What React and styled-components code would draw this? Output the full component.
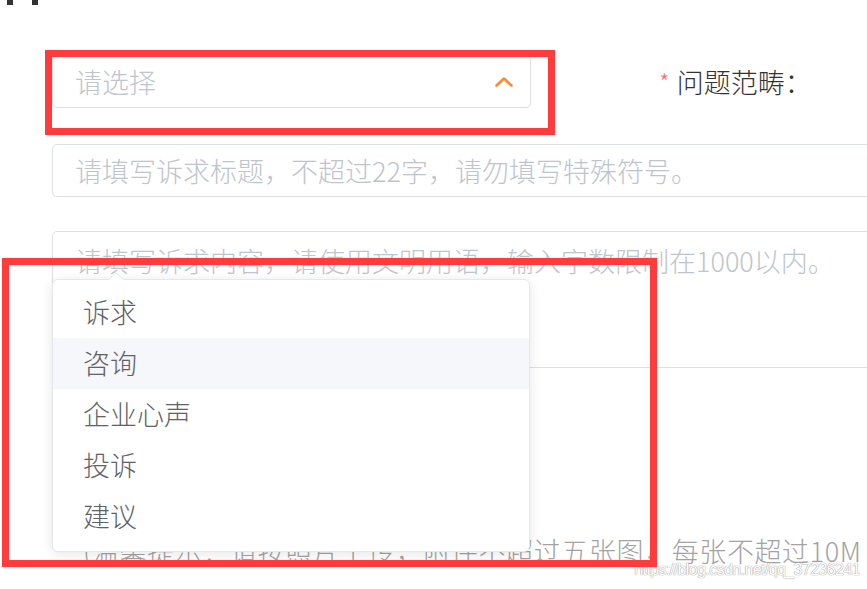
import React from "react";
import styled, { createGlobalStyle } from "styled-components";

const GlobalStyle = createGlobalStyle`
  html, body { margin: 0; padding: 0; background: #fff; }
  body { font-family: "Noto Sans CJK SC", "Noto Sans", sans-serif; }
  * { box-sizing: border-box; }
`;

const Page = styled.div`
  position: relative;
  width: 867px;
  height: 589px;
  overflow: hidden;
  background: #fff;
  font-weight: 300;
`;

const TopMarks = styled.div`
  margin-left: 7px;
  width: 31px;
  height: 5px;
  border-left: 6px solid #333;
  border-right: 6px solid #333;
`;

const Form = styled.div`
  display: flex;
  flex-direction: column;
  padding-left: 52px;
`;

const Row = styled.div`
  display: flex;
  align-items: center;
  margin-top: 50px;
  height: 53px;
`;

const Select = styled.div`
  width: 479px;
  height: 53px;
  flex: none;
  display: flex;
  align-items: center;
  justify-content: space-between;
  padding: 0 17px 0 22px;
  border: 1px solid #dcdfe6;
  border-radius: 5px;
  background: #fff;
`;

const Placeholder = styled.span`
  font-size: 27px;
  line-height: 1;
  color: #c0c4cc;
  white-space: nowrap;
`;

const Label = styled.div`
  margin-left: 128px;
  display: flex;
  align-items: center;
  gap: 7px;
  font-size: 27px;
  color: #333;
  white-space: nowrap;
`;

const Star = styled.span`
  color: #f56c6c;
  font-size: 24px;
`;

const Input = styled.div`
  margin-top: ${(p) => p.$gap}px;
  width: 900px;
  height: ${(p) => p.$h}px;
  border: 1px solid #dcdfe6;
  border-radius: 5px;
  padding: ${(p) => (p.$multi ? "9px 22px" : "0 22px")};
  display: flex;
  align-items: ${(p) => (p.$multi ? "flex-start" : "center")};
  font-size: 27px;
  line-height: 40px;
  color: #c0c4cc;
  white-space: nowrap;
`;

const Hint = styled.div`
  margin-top: 163px;
  padding-left: 31px;
  font-size: 27px;
  line-height: 40px;
  letter-spacing: 0.6px;
  color: #a3a3a3;
  white-space: nowrap;
`;

const Watermark = styled.div`
  position: absolute;
  right: 7px;
  top: 561px;
  font-family: "Liberation Sans", Arial, sans-serif;
  font-size: 16px;
  letter-spacing: -0.6px;
  color: #fff;
  text-shadow: 0 0 1px #9a9a9a, 0 0 1px #9a9a9a;
  white-space: nowrap;
`;

const Dropdown = styled.div`
  position: absolute;
  left: 52px;
  top: 279px;
  width: 478px;
  height: 273px;
  background: #fff;
  border: 1px solid #e4e7ed;
  border-radius: 6px;
  box-shadow: 0 2px 12px rgba(0, 0, 0, 0.1);
  padding: 7px 0 9px;
  z-index: 2;

  &::before {
    content: "";
    position: absolute;
    left: 55px;
    top: -8px;
    border: 8px solid transparent;
    border-top: 0;
    border-bottom-color: #e4e7ed;
  }
  &::after {
    content: "";
    position: absolute;
    left: 56px;
    top: -7px;
    border: 7px solid transparent;
    border-top: 0;
    border-bottom-color: #fff;
  }
`;

const Item = styled.div`
  height: 51px;
  line-height: 49px;
  padding-left: 30px;
  font-size: 27px;
  color: #606266;
  background: ${(p) => (p.$active ? "#f5f7fa" : "transparent")};
`;

const Frame = styled.div`
  position: absolute;
  left: ${(p) => p.$x}px;
  top: ${(p) => p.$y}px;
  width: ${(p) => p.$w}px;
  height: ${(p) => p.$h}px;
  border: 7px solid #ff3b3b;
  z-index: 3;
  pointer-events: none;
`;

const Chevron = () => (
  <svg width="18" height="12" viewBox="0 0 18 12" style={{ display: "block" }}>
    <polyline
      points="1.5,9.5 9,2.5 16.5,9.5"
      fill="none"
      stroke="#fa8a36"
      strokeWidth="2.6"
      strokeLinecap="round"
      strokeLinejoin="round"
    />
  </svg>
);

const options = ["诉求", "咨询", "企业心声", "投诉", "建议"];

export default function App() {
  return (
    <Page>
      <GlobalStyle />
      <TopMarks />
      <Form>
        <Row>
          <Select>
            <Placeholder>请选择</Placeholder>
            <Chevron />
          </Select>
          <Label>
            <Star>*</Star>
            <span>问题范畴：</span>
          </Label>
        </Row>
        <Input $gap={36} $h={53}>
          请填写诉求标题，不超过22字，请勿填写特殊符号。
        </Input>
        <Input $gap={34} $h={137} $multi>
          请填写诉求内容，请使用文明用语，输入字数限制在1000以内。
        </Input>
        <Hint>(温馨提示：请按照片上传，附件不超过五张图，每张不超过10M</Hint>
      </Form>
      <Dropdown>
        {options.map((o, i) => (
          <Item key={o} $active={i === 1}>
            {o}
          </Item>
        ))}
      </Dropdown>
      <Watermark>https://blog.csdn.net/qq_37236241</Watermark>
      <Frame $x={45} $y={50} $w={510} $h={85} />
      <Frame $x={2} $y={258} $w={655} $h={309} />
    </Page>
  );
}
